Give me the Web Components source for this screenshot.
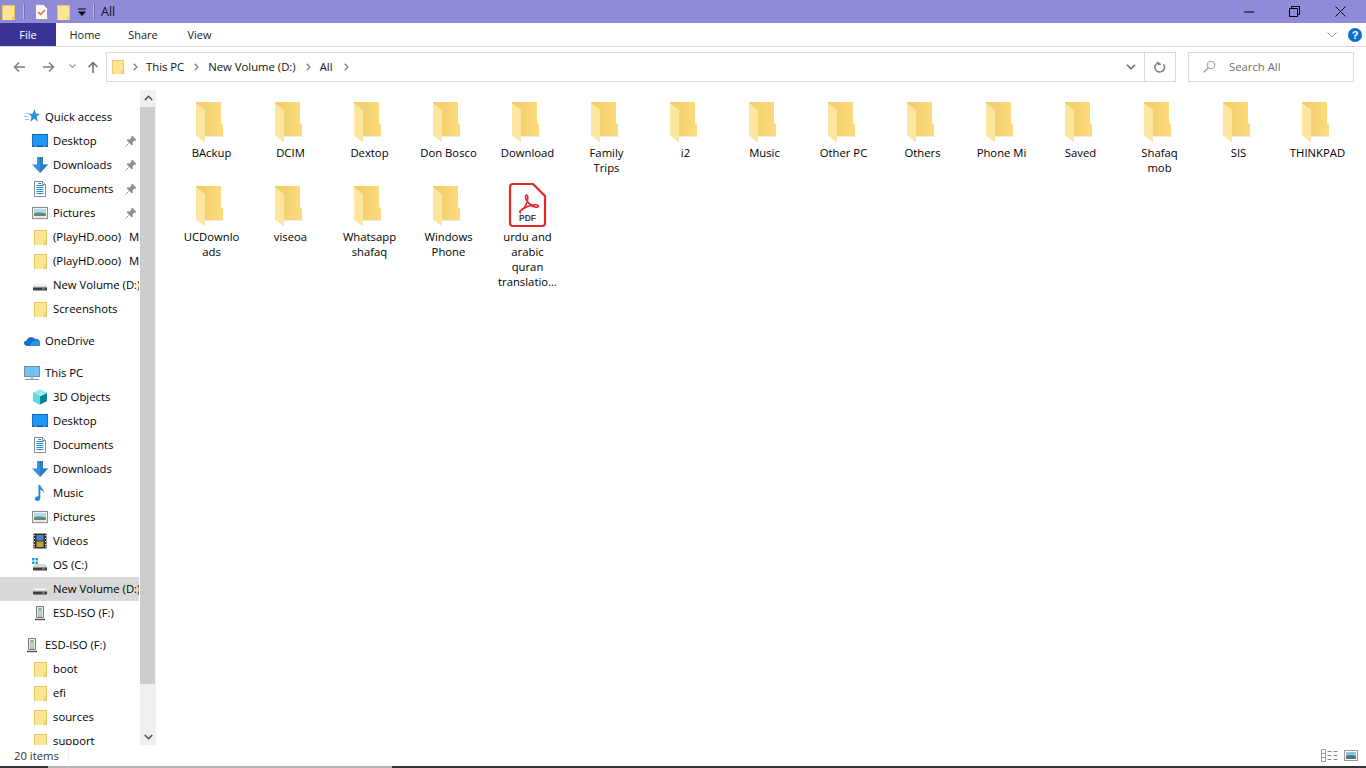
<!DOCTYPE html>
<html><head><meta charset="utf-8"><title>All</title>
<style>
html,body{margin:0;padding:0;background:#fff;overflow:hidden}
body{font:12px "Open Sans","Liberation Sans",sans-serif;color:#000}
</style></head><body>
<x-explorer>
  <x-titlebar slot="title">All</x-titlebar>
  <x-ribbon slot="ribbon"></x-ribbon>
  <x-navbar slot="nav"></x-navbar>
  <x-sidebar slot="side">
    <x-tree-item icon="star" root>Quick access</x-tree-item>
    <x-tree-item icon="desktop" pinned>Desktop</x-tree-item>
    <x-tree-item icon="download" pinned>Downloads</x-tree-item>
    <x-tree-item icon="doc" pinned>Documents</x-tree-item>
    <x-tree-item icon="pics" pinned>Pictures</x-tree-item>
    <x-tree-item icon="folder" style="word-spacing:5px">(PlayHD.ooo) Movies</x-tree-item>
    <x-tree-item icon="folder" style="word-spacing:5px">(PlayHD.ooo) Movies</x-tree-item>
    <x-tree-item icon="drive">New Volume (D:)</x-tree-item>
    <x-tree-item icon="folder">Screenshots</x-tree-item>
    <x-tree-item icon="cloud" root gap>OneDrive</x-tree-item>
    <x-tree-item icon="pc" root gap>This PC</x-tree-item>
    <x-tree-item icon="cube">3D Objects</x-tree-item>
    <x-tree-item icon="desktop">Desktop</x-tree-item>
    <x-tree-item icon="doc">Documents</x-tree-item>
    <x-tree-item icon="download">Downloads</x-tree-item>
    <x-tree-item icon="music">Music</x-tree-item>
    <x-tree-item icon="pics">Pictures</x-tree-item>
    <x-tree-item icon="film">Videos</x-tree-item>
    <x-tree-item icon="osdrive">OS (C:)</x-tree-item>
    <x-tree-item icon="drive" selected>New Volume (D:)</x-tree-item>
    <x-tree-item icon="usb">ESD-ISO (F:)</x-tree-item>
    <x-tree-item icon="usb" root gap>ESD-ISO (F:)</x-tree-item>
    <x-tree-item icon="folder">boot</x-tree-item>
    <x-tree-item icon="folder">efi</x-tree-item>
    <x-tree-item icon="folder">sources</x-tree-item>
    <x-tree-item icon="folder">support</x-tree-item>
  </x-sidebar>
  <x-filegrid slot="main">
    <x-file>BAckup</x-file><x-file>DCIM</x-file><x-file>Dextop</x-file><x-file>Don Bosco</x-file><x-file>Download</x-file>
    <x-file>Family<br>Trips</x-file><x-file>i2</x-file><x-file>Music</x-file><x-file>Other PC</x-file><x-file>Others</x-file>
    <x-file>Phone Mi</x-file><x-file>Saved</x-file><x-file>Shafaq<br>mob</x-file><x-file>SIS</x-file><x-file>THINKPAD</x-file>
    <x-file>UCDownlo<br>ads</x-file><x-file>viseoa</x-file><x-file>Whatsapp<br>shafaq</x-file><x-file>Windows<br>Phone</x-file>
    <x-file type="pdf">urdu and<br>arabic<br>quran<br>translatio...</x-file>
  </x-filegrid>
  <x-statusbar slot="status">20 items</x-statusbar>
</x-explorer>
<script>
const ICONS={
folder:'<rect x="2.500" y="1.500" width="12" height="15" fill="#fde594" stroke="#e6c75e"/><path d="M12.500 16V13h2v3z" fill="#f7d976" stroke="#e6c75e" stroke-width=".8"/>',
star:'<path d="M10.500 0l1.500 4.800h4l-3.300 3 1.300 5-3.800-3-4 3 1.400-5-3-3h4z" fill="#2b90e6"/><path d="M2 4.500h4M0 7.500h4M1 10.500h4" stroke="#8cc6f2" stroke-width="1"/>',
desktop:'<rect x=".5" y="1.500" width="15" height="12" fill="#1e96f2" stroke="#0e6fc2"/><path d="M1 12.500h14v1H1z" fill="#0b5fa8"/><path d="M3 13h1M12 13h1" stroke="#fff"/>',
download:'<path d="M5 0h6v7.500h5L8 16 0 7.500h5z" fill="#3a8ee0"/><path d="M8 0h3v7.500h5L8 16z" fill="#2d7ccb"/>',
doc:'<path d="M2.500.5h8l3 3v12h-11z" fill="#fff" stroke="#8a8a8a"/><path d="M10.500.5v3h3" fill="#e6e6e6" stroke="#8a8a8a"/><path d="M6 2.500h3M4.500 4.500h7M4.500 6.500h7M4.500 8.500h7M4.500 10.500h7M4.500 12.500h7" stroke="#1e88e0"/>',
pics:'<rect x=".5" y="2.500" width="15" height="11" fill="#fff" stroke="#8d8d8d" stroke-width="1.200"/><rect x="2" y="4" width="12" height="8" fill="#b4d8ee"/><path d="M2 8.500c3-1.500 6-1 12 0V12H2z" fill="#5f8d78"/><path d="M2 11h12v1H2z" fill="#dfe8e0"/>',
drive:'<path d="M3 7h10l2 3v3H1v-3z" fill="#d8d8d8"/><path d="M3 7h10l1 2H2z" fill="#efefef"/><rect x="1" y="10.500" width="14" height="3" fill="#3f3f3f"/><rect x="10.500" y="11.300" width="2" height="1.200" fill="#5ad05a"/>',
osdrive:'<path d="M3 7h10l2 3v3H1v-3z" fill="#d8d8d8"/><rect x="1" y="10.500" width="14" height="3" fill="#3f3f3f"/><rect x="10.500" y="11.300" width="2" height="1.200" fill="#5ad05a"/><path d="M0 1h2.500v2.500H0zM3.500 1H6v2.500H3.500zM0 4.500h2.500V7H0zM3.500 4.500H6V7H3.500z" fill="#19a0ea"/>',
usb:'<path d="M4.500 1.500h7v11h-7z" fill="#f1f1f1" stroke="#777"/><path d="M6.500 3.500h3V12h-3z" fill="#cfcfcf" stroke="#999" stroke-width=".6"/><path d="M7 3h2v2H7z" fill="#5cc25c"/><path d="M3 14.500h10" stroke="#555" stroke-width="1.500"/>',
cloud:'<path d="M3.500 13C1.500 13 0 11.800 0 10.200 0 8.700 1.200 7.700 2.600 7.600 3.200 5.300 5.100 4 7.200 4c1.500 0 2.800.7 3.600 1.900 2.700-.4 4.900 1.100 5.200 3.400v3.700z" fill="#1170c8"/><path d="M5 13l4-4.500c1.500-1.500 4-1.500 7 .8V12c0 .6-.4 1-1 1z" fill="#2a94e8"/>',
pc:'<rect x=".5" y="1.500" width="15" height="10" fill="#6fc4f7" stroke="#7a8ea0"/><path d="M6.500 11.500h3V14h-3z" fill="#b9c4cc"/><path d="M1 14.500h14" stroke="#8aa0b2" stroke-width="1.200"/>',
cube:'<path d="M8 .5l7 3.500v8l-7 3.500L1 12V4z" fill="#36c3cf"/><path d="M8 7.500l7-3.500v8l-7 3.500z" fill="#0f7f97"/><path d="M8 .5l7 3.500-7 3.500L1 4z" fill="#9aeaf0"/><path d="M1 4l7 3.500v8L1 12z" fill="#62d8df"/>',
music:'<path d="M6.500 0h1.800c.2 3 4 4 3.700 8-.8-2-2.200-2.700-3.700-3.200V13c0 1.700-1.400 3-3 3S3 15 3 13.700s1.300-2.400 2.800-2.400c.3 0 .5 0 .7.100z" fill="#1e88e5"/>',
film:'<rect x="1.500" y=".5" width="13" height="15" fill="#333"/><rect x="4.500" y="2" width="7" height="5.500" fill="#3f86c8"/><rect x="4.500" y="8.500" width="7" height="5.500" fill="#c9a23a"/><path d="M2.500 2v1M2.500 5v1M2.500 8v1M2.500 11v1M2.500 13.500v1M13.500 2v1M13.500 5v1M13.500 8v1M13.500 11v1M13.500 13.500v1" stroke="#ddd"/>'
};
function def(name,css,html){
  customElements.define(name,class extends HTMLElement{
    constructor(){super();const r=this.attachShadow({mode:'open'});
      r.innerHTML='<style>'+css+'</style>'+html;}
  });
}
customElements.define('x-icon',class extends HTMLElement{
  constructor(){super();this.attachShadow({mode:'open'});}
  connectedCallback(){
    const s=this.getAttribute('size')||16;
    this.shadowRoot.innerHTML='<style>:host{display:block;flex:none;width:'+s+'px;height:'+s+'px}svg{display:block}</style><svg width="'+s+'" height="'+s+'" viewBox="0 0 16 16">'+(ICONS[this.getAttribute('name')]||'')+'</svg>';
  }
});
def('x-explorer',`:host{display:flex;flex-direction:column;width:1366px;height:768px;overflow:hidden}
.main{flex:1;min-height:0;display:flex}
.strip{flex:none;height:2px;background:linear-gradient(90deg,#333 0 48px,#b5b5b5 48px 392px,#333 392px)}`,
`<slot name="title"></slot><slot name="ribbon"></slot><slot name="nav"></slot>
<div class="main"><slot name="side"></slot><slot name="main"></slot></div>
<slot name="status"></slot><div class="strip"></div>`);

def('x-titlebar',`:host{display:flex;align-items:center;flex:none;height:23px;background:#8f8bd9;color:#111;font-size:12.500px}
.l{display:flex;align-items:center;flex:1}
.sep{width:1px;height:15px;background:#b9b6e6;border-right:1px solid #77739f;flex:none}
.b{margin-left:7px}
.c{margin-left:10px}
.d{margin-left:6px}
.dd{margin-left:7px;margin-right:7px}
.t{margin-left:6px}
.w{display:flex;align-items:center;flex:none}
svg{display:block}`,
`<div class="l"><x-icon name="folder" size="16"></x-icon><span class="sep b"></span>
<svg class="c" width="14" height="16" viewBox="0 0 14 16"><path d="M.5.500h8l4 4v11H.5z" fill="#fafafa" stroke="#9a9a9a"/><path d="M3 8l2.500 2.500 4.500-4.500" fill="none" stroke="#e8622a" stroke-width="1.500"/></svg>
<x-icon class="d" name="folder" size="16"></x-icon>
<svg class="dd" width="8" height="8" viewBox="0 0 8 8"><path d="M0 1h8" stroke="#000"/><path d="M0 3.500h8L4 8z" fill="#000"/></svg>
<span class="sep"></span><span class="t"><slot></slot></span></div>
<div class="w">
<svg width="10" height="10" viewBox="0 0 10 10" style="margin-right:35px"><path d="M0 5h10" stroke="#000"/></svg>
<svg width="11" height="11" viewBox="0 0 11 11" style="margin-right:35px"><path d="M.5 2.500h8v8h-8zM2.500 2.500v-2h8v8h-2" fill="none" stroke="#000"/></svg>
<svg width="11" height="11" viewBox="0 0 11 11" style="margin-right:20px"><path d="M.5.500l10 10M10.500.500l-10 10" stroke="#000"/></svg></div>`);

def('x-ribbon',`:host{display:flex;align-items:center;flex:none;height:23px;border-bottom:1px solid #dadada;background:#fff;color:#222;font-size:11px}
.f{width:56px;height:23px;background:#3a3396;color:#fff;display:flex;align-items:center;justify-content:center}
.tab{width:58px;text-align:center}
.v{width:55px}
.sp{flex:1}
svg{display:block}
.q{width:14px;height:14px;border-radius:50%;background:#0f6fc6;color:#fff;font:bold 11px/14px "Liberation Sans",sans-serif;text-align:center;margin:0 4px 0 11px}`,
`<div class="f">File</div><div class="tab">Home</div><div class="tab">Share</div><div class="tab v">View</div><div class="sp"></div>
<svg width="10" height="6" viewBox="0 0 10 6"><path d="M.5.500L5 5l4.500-4.500" fill="none" stroke="#9a9a9a"/></svg><div class="q">?</div>`);

def('x-navbar',`:host{display:flex;align-items:center;flex:none;height:43px;box-sizing:border-box;padding:0 12px 4px 0;background:#fff;font-size:11.300px;color:#111}
svg{display:block;flex:none}
.box{height:30px;box-sizing:border-box;border:1px solid #d9d9d9;display:flex;align-items:center}
.addr{flex:none;width:1070px;margin-left:7px}
.search{width:166px;margin-left:12px;color:#6d6d6d}
.r{height:100%;width:30px;display:flex;align-items:center;justify-content:center;border-left:1px solid #d9d9d9}
.dd{margin-left:auto;margin-right:8px;border:0;width:auto}`,
`<svg width="12" height="12" viewBox="0 0 12 12" style="margin-left:13px"><path d="M12 6H1.500M6 1.500L1.500 6 6 10.500" fill="none" stroke="#7d7d7d" stroke-width="1.500"/></svg>
<svg width="12" height="12" viewBox="0 0 12 12" style="margin-left:18px"><path d="M0 6h10.500M6 1.500L10.500 6 6 10.500" fill="none" stroke="#7d7d7d" stroke-width="1.500"/></svg>
<svg width="7" height="5" viewBox="0 0 7 5" style="margin-left:14px"><path d="M.5.500l3 3 3-3" fill="none" stroke="#999" stroke-width="1.200"/></svg>
<svg width="12" height="12" viewBox="0 0 12 12" style="margin-left:11px"><path d="M6 12V1.500M1.500 6L6 1.500 10.500 6" fill="none" stroke="#6e6e6e" stroke-width="1.500"/></svg>
<div class="box addr">
<x-icon name="folder" size="15" style="margin-left:3px"></x-icon>
<svg style="margin:0 8px 0 8px" width="5" height="8" viewBox="0 0 5 8"><path d="M.7.700L4 4 .7 7.300" fill="none" stroke="#7d7d7d" stroke-width="1.300"/></svg><span>This PC</span>
<svg style="margin:0 9px 0 10px" width="5" height="8" viewBox="0 0 5 8"><path d="M.7.700L4 4 .7 7.300" fill="none" stroke="#7d7d7d" stroke-width="1.300"/></svg><span>New Volume (D:)</span>
<svg style="margin:0 9px 0 10px" width="5" height="8" viewBox="0 0 5 8"><path d="M.7.700L4 4 .7 7.300" fill="none" stroke="#7d7d7d" stroke-width="1.300"/></svg><span>All</span>
<svg style="margin:0 0 0 11px" width="5" height="8" viewBox="0 0 5 8"><path d="M.7.700L4 4 .7 7.300" fill="none" stroke="#7d7d7d" stroke-width="1.300"/></svg>
<div class="r dd"><svg width="10" height="6" viewBox="0 0 10 6"><path d="M1 .8L5 4.800 9 .8" fill="none" stroke="#6e6e6e" stroke-width="1.600"/></svg></div>
<div class="r"><svg width="12" height="12" viewBox="0 0 12 12"><path d="M9.600 3.400A4.800 4.800 0 1 1 4.500 1.600" fill="none" stroke="#7d7d7d" stroke-width="1.500"/><path d="M3.500 0v4h4z" fill="#7d7d7d" transform="rotate(-10 5 2)"/></svg></div>
</div>
<div class="box search">
<svg width="13" height="13" viewBox="0 0 13 13" style="margin:0 13px 0 14px"><circle cx="8" cy="5" r="3.800" fill="none" stroke="#9a9a9a"/><path d="M5.300 7.700L.7 12.300" stroke="#b08a72" stroke-width="1.200"/></svg><span>Search All</span></div>`);

def('x-sidebar',`:host{display:flex;flex:none;width:156px;height:100%;overflow:hidden}
.tree{width:140px;flex:none;box-sizing:border-box;padding-top:15px;overflow:hidden}
.sb{width:16px;flex:none;background:#f0f0f0;display:flex;flex-direction:column}
.btn{height:16px;flex:none;display:flex;align-items:center;justify-content:center;background:#f0f0f0}
.thumb{height:577px;width:15px;margin-top:1px;background:#cdcdcd;flex:none}
.sp{flex:1}
svg{display:block}`,
`<div class="tree"><slot></slot></div><div class="sb">
<div class="btn"><svg width="9" height="6" viewBox="0 0 9 6"><path d="M.8 5L4.500 1.300 8.200 5" fill="none" stroke="#505050" stroke-width="1.600"/></svg></div>
<div class="thumb"></div><div class="sp"></div>
<div class="btn"><svg width="9" height="6" viewBox="0 0 9 6"><path d="M.8 1L4.500 4.700 8.200 1" fill="none" stroke="#505050" stroke-width="1.600"/></svg></div></div>`);

customElements.define('x-tree-item',class extends HTMLElement{
  constructor(){super();this.attachShadow({mode:'open'});}
  connectedCallback(){
    const root=this.hasAttribute('root'),pin=this.hasAttribute('pinned');
    this.shadowRoot.innerHTML=`<style>:host{display:flex;align-items:center;height:24px;width:139px;box-sizing:border-box;padding-left:${root?24:32}px;font-size:11.300px;color:#000;white-space:nowrap;overflow:hidden}
:host([gap]){margin-top:8px}
:host([selected]){background:#d9d9d9}
.t{flex:1;min-width:0;overflow:hidden;margin-left:5px;position:relative;top:-1px}
svg{display:block;flex:none;margin-right:2px}</style>
<x-icon name="${this.getAttribute('icon')}"></x-icon><span class="t"><slot></slot></span>${pin?'<svg width="12" height="12" viewBox="0 0 12 12"><path d="M7 .5l4.500 4.500-1 .8-1-.3-2 2 .3 2-1 1L1.500 5.200l1-1 2 .3 2-2-.3-1z" fill="#8f8f8f"/><path d="M3.500 8.500L.5 11.500" stroke="#8f8f8f"/></svg>':''}`;
  }
});

def('x-filegrid',`:host{display:grid;flex:1;min-width:0;box-sizing:border-box;padding:8px 0 0 16px;grid-template-columns:repeat(15,79px);grid-auto-rows:84px;align-content:start}`,`<slot></slot>`);

customElements.define('x-file',class extends HTMLElement{
  constructor(){super();this.attachShadow({mode:'open'});}
  connectedCallback(){
    const pdf=this.getAttribute('type')==='pdf';
    const icon=pdf?`<svg width="48" height="48" viewBox="0 0 48 48">
<path d="M6 5a3 3 0 0 1 3-3h20l12 12v27a3 3 0 0 1-3 3H9a3 3 0 0 1-3-3z" fill="#fff" stroke="#e8262b" stroke-width="2.200"/>
<path d="M16 29c3-1 6-5 7.500-11 .6-3 .2-5-1-5s-1.500 2.500 0 5c2 3.500 4.500 6 8.500 7 2 .5 3.500 0 3.500-1s-2-1.500-5-1c-4 .6-8 2-11 4-2 1.500-3 3-2.500 3.500z" fill="none" stroke="#e8262b" stroke-width="1.600"/>
<text x="23.500" y="39" text-anchor="middle" font-family="Liberation Sans,sans-serif" font-weight="700" font-size="8.500" fill="#444">PDF</text></svg>`
    :`<svg width="48" height="48" viewBox="0 0 48 48"><defs><linearGradient id="g" x1="0" x2="1" y1="0" y2="0"><stop offset="0" stop-color="#efcb68"/><stop offset="1" stop-color="#fedc7e"/></linearGradient></defs>
<path d="M17 39h20l-2-1H17z" fill="#ececec"/>
<path d="M8 4H33V25L35 26V38H8Z" fill="url(#g)"/>
<path d="M8 5L17 12V44.500L8 37.500Z" fill="#fde6a0"/></svg>`;
    this.shadowRoot.innerHTML=`<style>:host{display:block;width:79px;font-size:11.300px;line-height:15px;color:#000;text-align:center}
svg{display:block;margin:0 auto}.l{width:77px;margin:-1px auto 0}</style>${icon}<div class="l"><slot></slot></div>`;
  }
});

def('x-statusbar',`:host{display:flex;align-items:center;flex:none;height:21px;box-sizing:border-box;padding-left:14px;font-size:11.300px;color:#333;background:#fff}
.s{width:1px;height:15px;background:#eee}
svg{display:block}`,
`<span style="width:54px"><slot></slot></span><span class="s"></span><span style="flex:1"></span>
<svg width="17" height="13" viewBox="0 0 17 13" style="margin-right:6px"><path d="M.5.500h4v12h-4zM.5 4.500h4M.5 8.500h4" fill="none" stroke="#9a9a9a"/><path d="M6.500 2.500h4M12.500 2.500h4M6.500 6.500h4M12.500 6.500h4M6.500 10.500h4M12.500 10.500h4" stroke="#8a8a8a"/></svg>
<svg width="14" height="11" viewBox="0 0 14 11" style="margin-right:8px"><rect x=".5" y=".5" width="13" height="10" fill="#fff" stroke="#9a9a9a"/><rect x="2" y="2" width="10" height="7" fill="#8fc3e6"/><path d="M2 6c3-1.500 6-1 10 0v3H2z" fill="#4f7d68"/></svg>`);
</script>
</body></html>
